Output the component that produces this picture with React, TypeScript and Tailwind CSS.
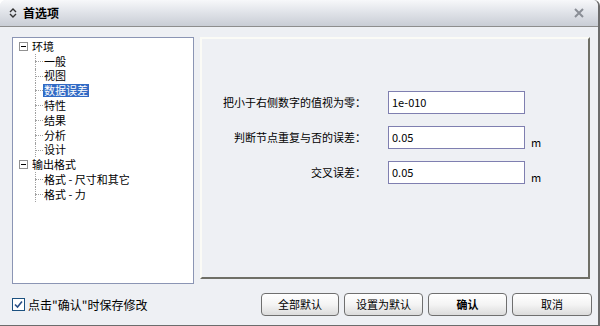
import React from "react"

const font = { fontFamily: '"Noto Sans CJK SC", "Liberation Sans", sans-serif' }

function TreeItem({ label, selected }: { label: string; selected?: boolean }) {
  return (
    <div className="relative flex h-[14.8px] items-center">
      <span className="absolute left-[17px] top-0 h-full border-l border-dotted border-[#a0a0a0]" />
      <span className="absolute left-[17px] top-[7px] w-[8px] border-t border-dotted border-[#a0a0a0]" />
      <span
        className={
          "ml-[25px] whitespace-nowrap px-[1px] leading-[13px] " +
          (selected ? "bg-[#316ac5] text-white" : "text-black")
        }
      >
        {label}
      </span>
    </div>
  )
}

function Group({ label, children }: { label: string; children: React.ReactNode }) {
  return (
    <div>
      <div className="relative flex h-[14.8px] items-center">
        <span className="ml-[1px] flex h-[9px] w-[9px] items-center justify-center border border-[#919191] bg-white">
          <span className="h-px w-[5px] bg-black" />
        </span>
        <span className="ml-[4px] leading-[13px]">{label}</span>
      </div>
      {children}
    </div>
  )
}

function Field({ label, value, unit }: { label: string; value: string; unit?: boolean }) {
  return (
    <div className="flex items-center">
      <div className="w-[186px] whitespace-nowrap pr-[22px] text-right">{label}</div>
      <div className="flex h-[23px] w-[137px] items-center border border-[#7f7fb0] bg-white px-[3px]">{value}</div>
      {unit ? <span className="ml-[6px] mt-[10px]">m</span> : null}
    </div>
  )
}

function Btn({ label, bold, w }: { label: string; bold?: boolean; w: string }) {
  return (
    <button
      className={
        "h-[23px] rounded-[4px] border border-[#6f6f6f] bg-gradient-to-b from-[#ffffff] via-[#f4f4f4] to-[#dcdcdc] text-[11px] text-black " +
        w +
        (bold ? " font-bold" : "")
      }
    >
      {label}
    </button>
  )
}

export default function App() {
  return (
    <div className="h-[326px] w-[600px] overflow-hidden text-[11px] leading-none text-black" style={font}>
      <div className="flex h-full flex-col rounded-t-[6px] border-r-2 border-r-[#6c6c6c] border-b border-b-[#6c6c6c] bg-[#eef0f4]">
        {/* title bar */}
        <div className="flex h-[27px] items-center rounded-t-[6px] border-b border-[#8d8d8d] bg-gradient-to-b from-[#f7f8fa] via-[#dfe2e8] to-[#c9cdd5] px-[8px]">
          <svg width="8" height="10" viewBox="0 0 8 10" className="ml-[1px]">
            <path d="M1 4 L4 1 L7 4" fill="none" stroke="#333" strokeWidth="1.4" />
            <path d="M1 6 L4 9 L7 6" fill="none" stroke="#333" strokeWidth="1.4" />
          </svg>
          <span className="ml-[6px] text-[12px] font-bold">首选项</span>
          <svg width="10" height="10" viewBox="0 0 10 10" className="ml-auto mr-[6px]">
            <path d="M1 1 L9 9 M9 1 L1 9" stroke="#8a8e96" strokeWidth="2" />
          </svg>
        </div>

        {/* body */}
        <div className="flex gap-[6px] pl-[12px] pr-[8px] pt-[10px]">
          <div className="h-[247px] w-[182px] border border-[#8b95b4] bg-white pl-[5px] pt-[1px]">
            <Group label="环境">
              <TreeItem label="一般" />
              <TreeItem label="视图" />
              <TreeItem label="数据误差" selected />
              <TreeItem label="特性" />
              <TreeItem label="结果" />
              <TreeItem label="分析" />
              <TreeItem label="设计" />
            </Group>
            <Group label="输出格式">
              <TreeItem label="格式 - 尺寸和其它" />
              <TreeItem label="格式 - 力" />
            </Group>
          </div>
          <div className="flex h-[242px] flex-1 flex-col gap-[12px] border-2 border-l-[#fbfbf6] border-t-[#fbfbf6] border-r-[#6f6f66] border-b-[#6f6f66] bg-[#eef0f4] pt-[52px]">
            <Field label="把小于右侧数字的值视为零：" value="1e-010" />
            <Field label="判断节点重复与否的误差：" value="0.05" unit />
            <Field label="交叉误差：" value="0.05" unit />
          </div>
        </div>

        {/* footer */}
        <div className="mt-[9px] flex items-center pl-[12px] pr-[6px]">
          <span className="flex h-[13px] w-[13px] items-center justify-center border border-[#1c5180] bg-white">
            <svg width="9" height="9" viewBox="0 0 9 9">
              <path d="M1 4.5 L3.5 7 L8 1.5" fill="none" stroke="#2a4f86" strokeWidth="1.6" />
            </svg>
          </span>
          <span className="ml-[3px] text-[12px]">点击"确认"时保存修改</span>
          <div className="ml-auto flex gap-[5px]">
            <Btn label="全部默认" w="w-[78px]" />
            <Btn label="设置为默认" w="w-[79px]" />
            <Btn label="确认" bold w="w-[79px]" />
            <Btn label="取消" w="w-[80px]" />
          </div>
        </div>
      </div>
    </div>
  )
}
